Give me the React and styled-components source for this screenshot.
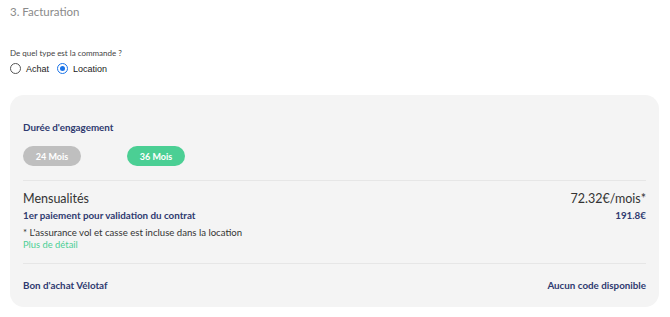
import React from 'react';
import styled, { createGlobalStyle } from 'styled-components';

const Global = createGlobalStyle`
  body {
    margin: 0;
    background: #fff;
    font-family: "Lato", "Open Sans", sans-serif;
  }
`;

const Page = styled.div`
  width: 670px;
  padding: 4px 11px 0 10px;
  box-sizing: border-box;
`;

const StepTitle = styled.h2`
  margin: 0;
  font-size: 11.5px;
  font-weight: 400;
  color: #8a8a8a;
  line-height: 16px;
`;

const Question = styled.p`
  margin: 27px 0 0;
  font-size: 8px;
  color: #444;
  line-height: 12px;
`;

const RadioRow = styled.div`
  display: flex;
  align-items: center;
  gap: 8px;
  margin-top: 4px;
`;

const RadioLabel = styled.label`
  display: flex;
  align-items: center;
  gap: 5px;
  font-family: "Liberation Sans", Arial, sans-serif;
  font-size: 9px;
  color: #222;
`;

const Circle = styled.span`
  width: 11px;
  height: 11px;
  border-radius: 50%;
  box-sizing: border-box;
  border: 1.3px solid ${p => (p.$on ? '#1a73e8' : '#555')};
  display: flex;
  align-items: center;
  justify-content: center;
  &::after {
    content: '';
    width: 5px;
    height: 5px;
    border-radius: 50%;
    background: ${p => (p.$on ? '#1a73e8' : 'transparent')};
  }
`;

const Panel = styled.section`
  margin-top: 21px;
  background: #f4f4f4;
  border-radius: 14px;
  padding: 25px 13px 15px 13px;
`;

const Label = styled.div`
  font-size: 9.8px;
  font-weight: 700;
  color: #2f3a70;
  line-height: 14px;
`;

const Pills = styled.div`
  display: flex;
  gap: 46px;
  margin-top: 12px;
`;

const Pill = styled.button`
  width: 58px;
  height: 20px;
  border: none;
  border-radius: 10px;
  background: ${p => (p.$active ? '#4bcf94' : '#bfbfbf')};
  color: #fff;
  font-family: inherit;
  font-size: 9px;
  font-weight: 700;
  padding: 0;
`;

const Divider = styled.hr`
  border: none;
  border-top: 1px solid #e6e6e6;
  margin: ${p => p.$m || '13px 0 0'};
`;

const Row = styled.div`
  display: flex;
  justify-content: space-between;
  align-items: baseline;
  margin-top: ${p => p.$mt || 0}px;
`;

const Big = styled.span`
  font-size: 12.5px;
  color: #333;
  line-height: 16px;
`;

const Notes = styled.div`
  margin-top: 5px;
`;

const Note = styled.div`
  font-size: 9.6px;
  color: #333;
  line-height: 12px;
`;

const Link = styled.a`
  display: block;
  font-size: 9.4px;
  color: #4bcf94;
  line-height: 12px;
`;

const App = () => (
  <Page>
    <Global />
    <StepTitle>3. Facturation</StepTitle>
    <Question>De quel type est la commande ?</Question>
    <RadioRow>
      <RadioLabel>
        <Circle />
        Achat
      </RadioLabel>
      <RadioLabel>
        <Circle $on />
        Location
      </RadioLabel>
    </RadioRow>

    <Panel>
      <Label>Durée d'engagement</Label>
      <Pills>
        <Pill>24 Mois</Pill>
        <Pill $active>36 Mois</Pill>
      </Pills>
      <Divider $m="14px 0 10px" />
      <Row>
        <Big>Mensualités</Big>
        <Big>72.32€/mois*</Big>
      </Row>
      <Row $mt={1}>
        <Label>1er paiement pour validation du contrat</Label>
        <Label>191.8€</Label>
      </Row>
      <Notes>
        <Note>* L'assurance vol et casse est incluse dans la location</Note>
        <Link>Plus de détail</Link>
      </Notes>
      <Divider $m="12px 0 14px" />
      <Row>
        <Label>Bon d'achat Vélotaf</Label>
        <Label>Aucun code disponible</Label>
      </Row>
    </Panel>
  </Page>
);

export default App;
